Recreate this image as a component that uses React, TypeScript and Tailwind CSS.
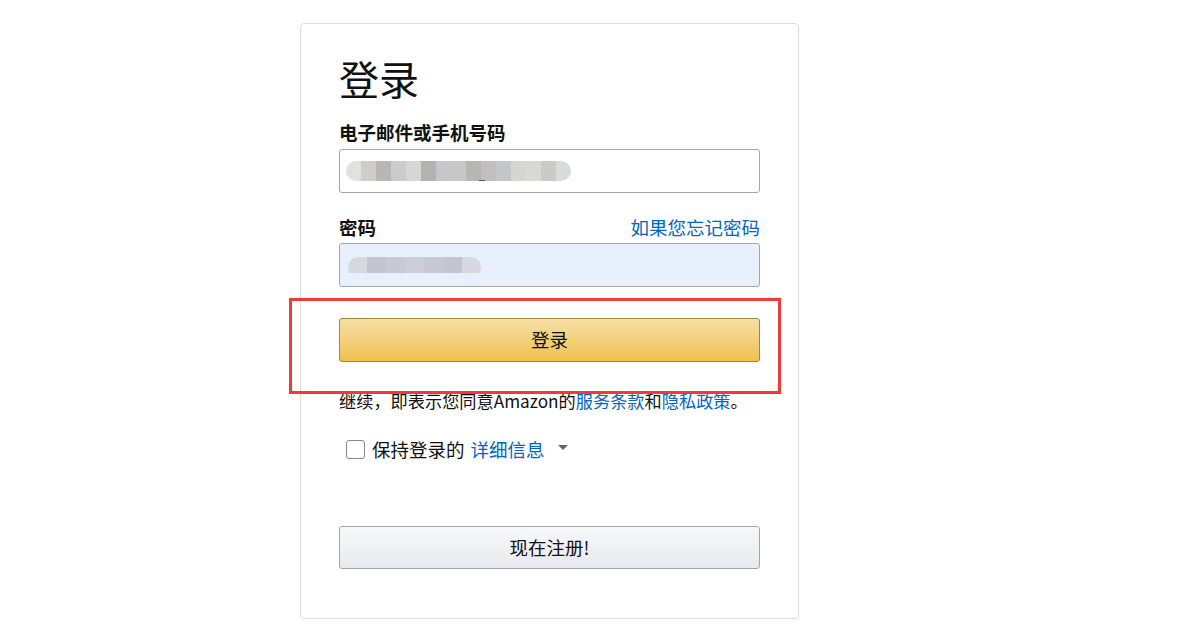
const FONT = '"Noto Sans CJK SC", "Noto Sans", Arial, sans-serif';

const emailBlur = ['#e2e1e2', '#cfcccb', '#b8b7b6', '#c9cbcd', '#d7d6d2', '#b3b2b0', '#c6c7ca', '#c7c9c4', '#b6b7b4', '#c2bebd', '#c3c6ca', '#d6d5d2', '#d9d8d4', '#cbcac5', '#d8dadc'];
const pwBlur = ['#d5d8de', '#c3c6cf', '#c7cad3', '#cbcfd8', '#c6c9d3', '#c2c6d0', '#d6d9e0'];

function Blur({ colors, block }: { colors: string[]; block: number }) {
  return (
    <div className="flex h-[20px] overflow-hidden rounded-full">
      {colors.map((c, i) => (
        <div key={i} className="h-full" style={{ width: block, background: c }} />
      ))}
    </div>
  );
}

export default function App() {
  return (
    <div className="min-h-[638px] bg-white text-[#111]" style={{ fontFamily: FONT }}>
      <div className="pt-[23px] pl-[300px]">
        <div className="relative h-[596px] w-[499px] rounded-[4px] border border-[#dddddd] px-[38px] pt-[28px]">
          <h1 className="text-[40px] leading-[52px] font-normal">登录</h1>

          <div className="mt-[16px] text-[18.5px] leading-[24px] font-bold">电子邮件或手机号码</div>
          <div className="mt-[5px] flex h-[44px] items-center rounded-[3px] border border-[#a6a6a6] pl-[6px]">
            <div className="relative">
              <Blur colors={emailBlur} block={15} />
              <div className="absolute left-[133px] top-[19px] h-[1px] w-[6px] bg-[#555]" />
            </div>
          </div>

          <div className="mt-[22px] flex items-end justify-between">
            <span className="text-[18.5px] leading-[24px] font-bold">密码</span>
            <a className="text-[18.5px] leading-[24px] text-[#0066c0]">如果您忘记密码</a>
          </div>
          <div className="mt-[4px] flex h-[44px] items-center rounded-[3px] border border-[#a6a6a6] bg-[#e8f0fe] pl-[8px]">
            <div className="h-[16px] overflow-hidden">
              <Blur colors={pwBlur} block={19} />
            </div>
          </div>

          <button className="mt-[31px] flex h-[44px] w-full items-center justify-center rounded-[3px] border border-[#a88734] bg-gradient-to-b from-[#f7dfa5] to-[#f0c14b] text-[18.5px] text-[#111]">
            登录
          </button>

          <p className="mt-[28px] text-[17.2px] leading-[22px] whitespace-nowrap">
            继续，即表示您同意Amazon的<a className="text-[#0066c0]">服务条款</a>和<a className="text-[#0066c0]">隐私政策</a>。
          </p>

          <div className="mt-[25px] flex items-center pl-[7px]">
            <div className="h-[19px] w-[19px] rounded-[3px] border border-[#888]" />
            <span className="ml-[7px] text-[18.5px] leading-[24px]">保持登录的</span>
            <a className="ml-[6px] text-[18.5px] leading-[24px] text-[#0066c0]">详细信息</a>
            <span className="ml-[13px] mb-[3px] h-0 w-0 border-x-[5px] border-t-[5px] border-x-transparent border-t-[#666]" />
          </div>

          <button className="mt-[65px] flex h-[43px] w-full items-center justify-center rounded-[3px] border border-[#a2a6ac] bg-gradient-to-b from-[#f7f8fa] to-[#e7e9ec] text-[18.5px] text-[#111]">
            现在注册!
          </button>

          <div className="pointer-events-none absolute left-[-12px] top-[274px] h-[96px] w-[492px] border-[3px] border-[#f03a3a]" />
        </div>
      </div>
    </div>
  );
}
